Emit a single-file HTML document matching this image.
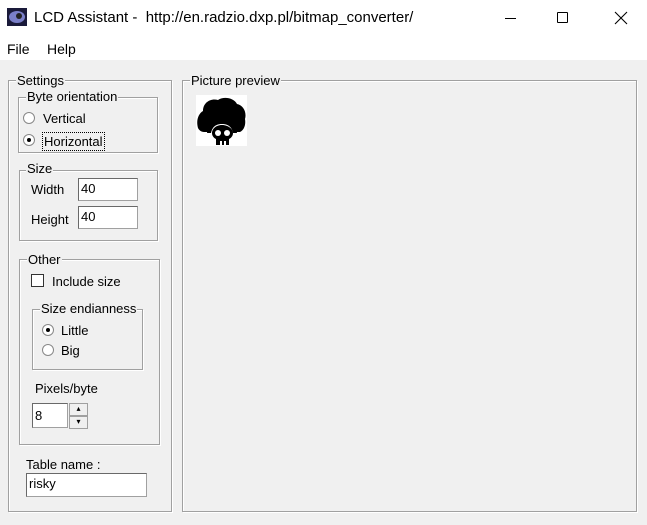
<!DOCTYPE html>
<html><head><style>
*{margin:0;padding:0;box-sizing:border-box}
body{width:647px;height:525px;background:#f0f0f0;position:relative;overflow:hidden;font-family:"Liberation Sans",sans-serif;font-size:13px;color:#000}
.a{position:absolute}
.g{position:absolute;border:1px solid #a0a0a0;box-shadow:inset 1px 1px 0 #fff,1px 1px 0 #fff}
.lg{position:absolute;background:#f0f0f0;padding:0 1px;line-height:14px;white-space:nowrap}
.in{position:absolute;background:#fff;border:1px solid #a0a0a0;border-top-color:#696969;border-left-color:#696969;padding-left:2px;line-height:20px;font-size:13px}
.rad{position:absolute;width:12px;height:12px;border-radius:50%;background:#fff;border:1px solid #888;}
</style></head><body>
<div class="a" style="left:0;top:0;width:647px;height:60px;background:#fff"></div>
<svg class="a" style="left:7px;top:8px" width="20" height="18"><rect width="20" height="18" fill="#1a1a3a"/><ellipse cx="10" cy="9" rx="8" ry="6" fill="#7a7fc8"/><ellipse cx="12" cy="8" rx="3" ry="3" fill="#222"/></svg>
<div class="a" style="left:34px;top:9px;font-size:15px;">LCD Assistant -&nbsp; http://en.radzio.dxp.pl/bitmap_converter/</div>
<div class="a" style="left:505px;top:18px;width:11px;height:1px;background:#000"></div>
<div class="a" style="left:557px;top:12px;width:11px;height:11px;border:1px solid #000;border-radius:1px"></div>
<svg class="a" style="left:614px;top:11px" width="14" height="14"><path d="M1 1L13 13M13 1L1 13" stroke="#000" stroke-width="1.1"/></svg>
<div class="a" style="left:7px;top:41px;font-size:14px">File</div>
<div class="a" style="left:47px;top:41px;font-size:14px">Help</div>

<div class="g" style="left:8px;top:80px;width:164px;height:432px"></div>
<div class="lg" style="left:16px;top:74px">Settings</div>
<div class="g" style="left:18px;top:97px;width:140px;height:56px"></div>
<div class="lg" style="left:26px;top:90px">Byte orientation</div>
<div class="rad" style="left:23px;top:112px"></div>
<div class="a" style="left:43px;top:111px">Vertical</div>
<div class="rad" style="left:23px;top:134px"><div style="position:absolute;left:3px;top:3px;width:4px;height:4px;border-radius:50%;background:#000"></div></div>
<div class="a" style="left:42px;top:132px;border:1px dotted #000;padding:0 1px;line-height:17px">Horizontal</div>

<div class="g" style="left:19px;top:170px;width:139px;height:71px"></div>
<div class="lg" style="left:26px;top:162px">Size</div>
<div class="a" style="left:31px;top:182px">Width</div>
<div class="in" style="left:78px;top:178px;width:60px;height:23px">40</div>
<div class="a" style="left:31px;top:212px">Height</div>
<div class="in" style="left:78px;top:206px;width:60px;height:23px">40</div>

<div class="g" style="left:19px;top:259px;width:141px;height:186px"></div>
<div class="lg" style="left:27px;top:253px">Other</div>
<div class="a" style="left:31px;top:274px;width:13px;height:13px;background:#fff;border:1px solid #333"></div>
<div class="a" style="left:52px;top:274px">Include size</div>
<div class="g" style="left:32px;top:309px;width:111px;height:61px"></div>
<div class="lg" style="left:40px;top:302px">Size endianness</div>
<div class="rad" style="left:42px;top:324px"><div style="position:absolute;left:3px;top:3px;width:4px;height:4px;border-radius:50%;background:#000"></div></div>
<div class="a" style="left:61px;top:323px">Little</div>
<div class="rad" style="left:42px;top:344px"></div>
<div class="a" style="left:61px;top:343px">Big</div>
<div class="a" style="left:35px;top:381px">Pixels/byte</div>
<div class="in" style="left:32px;top:403px;width:36px;height:25px;line-height:23px">8</div>
<div class="a" style="left:69px;top:403px;width:19px;height:13px;border:1px solid #a0a0a0;font-size:8px;text-align:center;line-height:10px">▴</div>
<div class="a" style="left:69px;top:416px;width:19px;height:13px;border:1px solid #a0a0a0;font-size:8px;text-align:center;line-height:10px">▾</div>

<div class="a" style="left:26px;top:457px">Table name :</div>
<div class="in" style="left:26px;top:473px;width:121px;height:24px">risky</div>

<div class="g" style="left:182px;top:80px;width:455px;height:432px"></div>
<div class="lg" style="left:190px;top:74px">Picture preview</div>
<svg class="a" style="left:196px;top:95px" width="51" height="51"><rect width="51" height="51" fill="#fff"/>
<path d="M2 33C0 26 2 19 7 16C7 8 14 3 22 5C28 1 38 3 41 9C47 10 51 17 49 24C50 30 48 35 44 37L8 37C5 37 3 35 2 33Z" fill="#000"/>
<circle cx="26" cy="40" r="13" fill="#fff"/>
<path d="M11 38C12 30 18 25 26 25C34 25 40 30 41 38L37 38C36 32 32 29 26 29C20 29 16 32 15 38Z" fill="#000"/>
<path d="M26 30C20 30 16 34 16 38C16 41 18 43 20 44L20 50L33 50L33 44C35 43 37 41 37 38C37 34 32 30 26 30Z" fill="#000"/>
<circle cx="22" cy="38" r="3" fill="#fff"/><circle cx="31" cy="38" r="3" fill="#fff"/>
<rect x="24" y="46" width="2" height="4" fill="#fff"/><rect x="28" y="46" width="2" height="4" fill="#fff"/>
</svg>
</body></html>
